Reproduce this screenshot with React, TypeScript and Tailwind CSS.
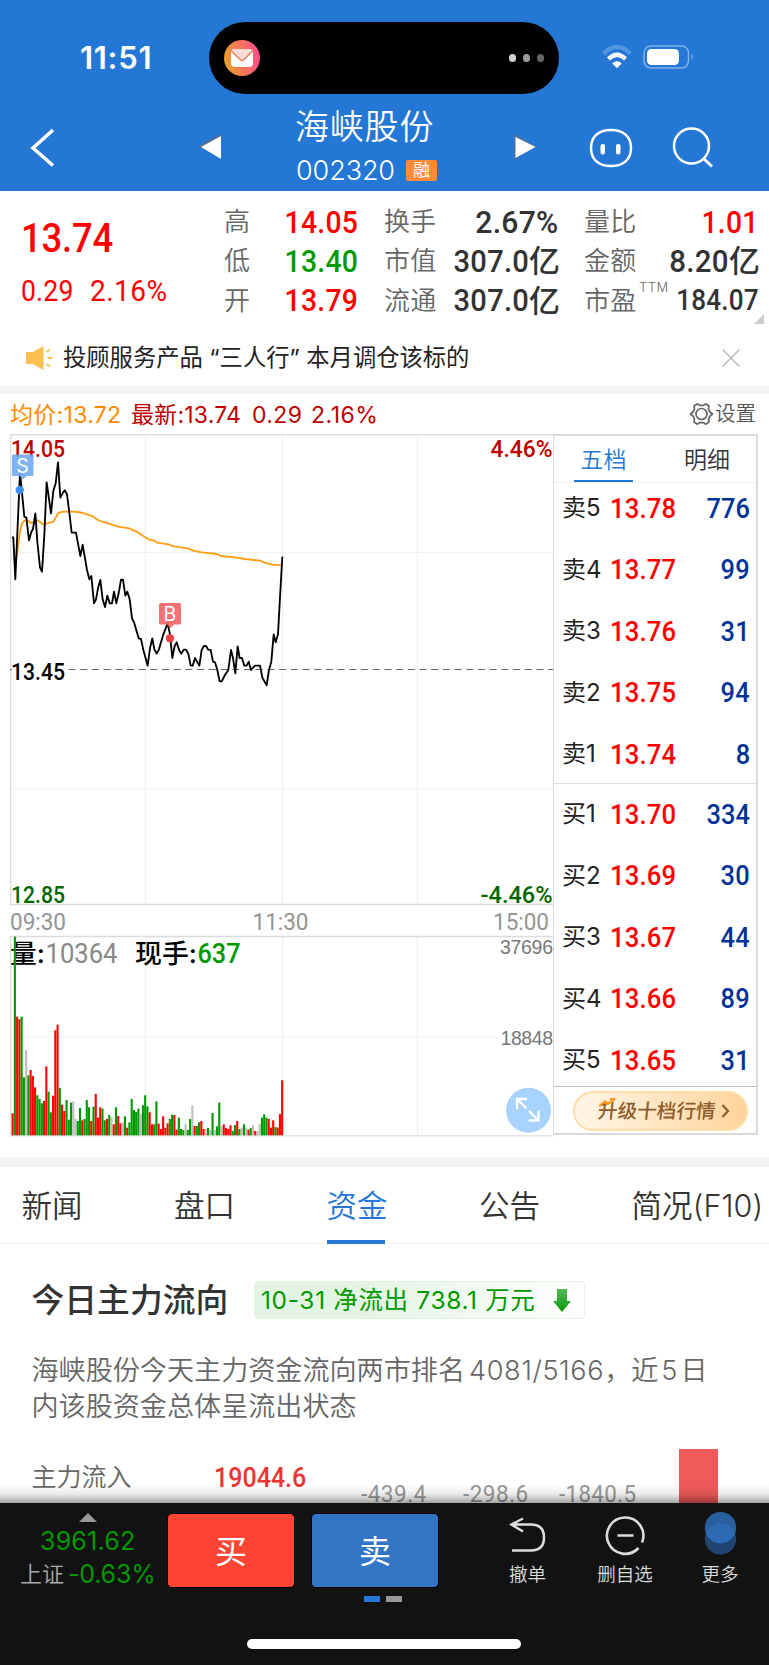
const PRICE_LINE =
  "37,455 40,458 46,583 60,262 73,395 79,398 87,466 94,440 99,432 106,385 112,470 120,548 126,560 133,450 140,292 153,385 160,318 167,295 174,232 181,338 188,325 194,316 201,328 207,375 215,443 228,443 241,513 248,479 261,555 268,583 274,573 282,655 288,643 295,605 301,585 308,643 315,666 322,632 329,655 336,655 342,620 349,655 356,625 363,584 369,584 376,632 382,620 389,643 396,700 402,712 416,760 423,762 430,795 443,842 450,790 457,760 463,793 470,806 477,793 490,748 503,715 510,748 517,819 524,783 530,772 537,794 544,806 551,794 558,794 565,806 572,842 578,842 585,819 598,842 605,795 612,783 618,783 625,794 632,795 639,830 645,832 652,855 659,889 665,889 675,870 685,855 693,795 699,819 706,865 713,784 719,819 726,819 733,842 740,842 746,830 753,855 765,842 780,842 787,878 800,901 807,855 814,830 821,748 827,772 834,748 841,620 847,515";

const AVG_LINE =
  "46,540 52,500 60,440 66,415 73,408 80,403 92,414 100,412 113,406 131,419 145,414 160,410 167,398 174,385 183,381 207,379 235,381 255,386 278,394 290,403 310,411 355,425 388,430 415,443 445,463 463,467 472,473 505,478 522,484 567,491 580,497 605,502 650,507 662,513 705,517 735,522 780,527 800,535 820,539 847,541";

// one entry per minute: r = up, g = down, n = flat, then the height
const VOLUME =
  "r66 g596 r356 r348 g356 g174 n256 g180 r196 r178 r144 g120 g109 g96 r103 r207 g131 g69 r119 r315 r332 g142 r92 r73 g106 g47 g98 n102 n49 g43 g82 r45 g49 g106 g84 r43 g86 r124 r53 r84 g80 g45 r49 g61 n55 r33 g84 r58 r36 n39 g57 r23 g39 g109 g76 g70 g80 n64 g90 g120 g87 r69 r33 g33 g102 r35 r19 r57 r23 r36 g49 g62 r61 r17 g53 g19 g16 n33 g16 g49 n90 r28 g28 g39 r43 r19 n19 g22 n16 g67 n16 g27 g98 n28 r33 r22 r19 r30 g13 g31 r43 g19 n23 g33 n23 r17 g22 n31 r13 n13 n33 g53 g63 g53 r49 r23 r45 g25 r23 r64 r165"
    .split(" ")
    .map(v => ({ dir: v[0], h: Number(v.slice(1)) }));

const BAR_COLOR: Record<string, string> = { r: "#ff0000", g: "#009900", n: "#bdbdbd" };

const SELLS = [
  ["卖5", "13.78", "776"],
  ["卖4", "13.77", "99"],
  ["卖3", "13.76", "31"],
  ["卖2", "13.75", "94"],
  ["卖1", "13.74", "8"],
];

const BUYS = [
  ["买1", "13.70", "334"],
  ["买2", "13.69", "30"],
  ["买3", "13.67", "44"],
  ["买4", "13.66", "89"],
  ["买5", "13.65", "31"],
];

const TABS = ["新闻", "盘口", "资金", "公告", "简况(F10)"];

const DIN = "inline-block whitespace-nowrap [font-family:Roboto,'Noto_Sans_CJK_SC',sans-serif]";

function StatusBar() {
  return (
    <div className="flex h-[94px] items-start">
      <div className="ml-[80px] mt-[40px] w-[129px] text-[31px] leading-[36px] font-semibold tracking-[0.7px]">11:51</div>
      <div className="mt-[22px] flex h-[72px] w-[350px] items-center rounded-full bg-black px-[15px]">
        <svg width="36" height="36" viewBox="0 0 36 36">
          <defs>
            <linearGradient id="mail" x1="0" y1="0.6" x2="1" y2="0.4">
              <stop offset="0" stopColor="#eda12b" />
              <stop offset="1" stopColor="#ff4b8b" />
            </linearGradient>
          </defs>
          <circle cx="18" cy="18" r="18" fill="url(#mail)" />
          <rect x="7" y="9" width="22" height="18" rx="4" fill="#fff" />
          <path d="M8 10.5 Q9 9 11 9 H25 Q27 9 28 10.5 L20.500 18.500 Q18 21 15.500 18.500 Z" fill="#ffdcd6" />
          <path d="M7.500 11 L15.500 19 Q18 22 20.500 19 L28.500 11" fill="none" stroke="#f4774f" strokeWidth="1.300" />
        </svg>
        <div className="ml-auto flex gap-[6.500px]">
          <i className="size-[7.500px] rounded-full bg-[#d0d0d0]" />
          <i className="size-[7.500px] rounded-full bg-[#9b9b9b]" />
          <i className="size-[7.500px] rounded-full bg-[#666]" />
        </div>
      </div>
      <svg className="ml-[43px] mt-[45px]" width="30" height="24" viewBox="0 0 30 24">
        <path d="M1.500 8.500 Q15 -4.500 28.500 8.500" fill="none" stroke="#5496e0" strokeWidth="4.200" />
        <path d="M6.500 14 Q15 5.500 23.500 14" fill="none" stroke="#fff" strokeWidth="4.200" />
        <path d="M10.300 18.500 Q15 14 19.700 18.500 L15 23.300 Z" fill="#fff" />
      </svg>
      <svg className="ml-[11px] mt-[45px]" width="52" height="24" viewBox="0 0 52 24">
        <rect x="1" y="1" width="44.500" height="22" rx="7" fill="none" stroke="#7fb0e7" strokeWidth="1.500" />
        <rect x="4" y="4" width="32" height="16" rx="4.500" fill="#fff" />
        <path d="M48.500 8.500 Q51 12 48.500 15.500 Z" fill="#7fb0e7" />
      </svg>
    </div>
  );
}

function NavBar() {
  return (
    <div className="flex h-[97px] items-start">
      <svg className="ml-[30px] mt-[34px]" width="26" height="40" viewBox="0 0 26 40">
        <path d="M23 2 L3 20 L23 37.500" fill="none" stroke="#fff" strokeWidth="3.500" />
      </svg>
      <svg className="ml-[142px] mt-[39px]" width="24" height="28" viewBox="0 0 24 28">
        <path d="M23 1 L1 13 L5 16 L22 5 Z" fill="#6b6b6b" opacity="0.7" />
        <path d="M23 3 V26 L3 14 Z" fill="#fff" />
      </svg>
      <div className="ml-[73px] mt-[11px] w-[152px]">
        <div className="text-[34px] leading-[44px] tracking-[0.8px] [font-weight:350]">海峡股份</div>
        <div className="flex h-[42px] items-center">
          <span className="ml-[1px] text-[27px] leading-[41px] tracking-[-0.1px] [font-weight:350]">002320</span>
          <span className="ml-auto mr-[10px] flex h-[21px] w-[31px] items-center justify-center rounded-[2px] bg-[#ff8b3a] text-[17px] leading-none">融</span>
        </div>
      </div>
      <svg className="ml-[67px] mt-[39px]" width="24" height="28" viewBox="0 0 24 28">
        <path d="M0 1 L23 14 L21 16 L3 6 V26 H0 Z" fill="#6b6b6b" opacity="0.7" />
        <path d="M1.500 4 V25 L21.500 14 Z" fill="#fff" />
      </svg>
      <svg className="ml-[51px] mt-[34px]" width="44" height="40" viewBox="0 0 44 40">
        <path d="M22 2 C35 2 42 9 42 20 C42 31 35 38 22 38 C9 38 2 31 2 20 C2 9 9 2 22 2 Z" fill="none" stroke="#fff" strokeWidth="2.500" />
        <rect x="11.500" y="16" width="4.500" height="10.500" rx="2" fill="#fff" />
        <rect x="27" y="16" width="4.500" height="10.500" rx="2" fill="#fff" />
      </svg>
      <svg className="ml-[39px] mt-[32px]" width="42" height="42" viewBox="0 0 42 42">
        <circle cx="19.500" cy="20" r="17.500" fill="none" stroke="#fff" strokeWidth="2.500" />
        <path d="M31.500 32.500 L40 40.500" stroke="#fff" strokeWidth="3" />
      </svg>
    </div>
  );
}

type StatProps = { label: string; sup?: string; value: string; unit?: string; tone?: string; size?: string };

function Stat({ label, sup, value, unit, tone = "text-[#333]", size = "text-[32px] scale-x-[0.885] tracking-[0.3px]" }: StatProps) {
  return (
    <div className="flex h-[39.300px] items-center justify-between">
      <span className="relative text-[26px] tracking-[0.2px] [font-weight:350] text-[#666] whitespace-nowrap">
        {label}
        {sup && <sup className="absolute left-[55px] top-[-4px] text-[13px] tracking-[0.5px] leading-[20px]">{sup}</sup>}
      </span>
      <span className={`flex items-center font-medium ${tone}`}>
        <span className={`${DIN} origin-right ${size}`}>{value}</span>
        {unit && <span className="-mr-[1px] text-[31px] leading-[39px]">{unit}</span>}
      </span>
    </div>
  );
}

function Quote() {
  return (
    <div className="flex h-[142px] items-start">
      <div className="w-[224px] pl-[21px] pt-[20px] text-[#f00]">
        <div className={`${DIN} origin-left scale-x-[0.9] text-[40.500px] leading-[54px] font-medium tracking-[-0.200px]`}>13.74</div>
        <div className="flex text-[29.500px] leading-[52px] [font-weight:450]">
          <span className={`${DIN} w-[69px] origin-left scale-x-[0.9] tracking-[0.200px]`}>0.29</span>
          <span className={`${DIN} origin-left scale-x-[0.95] tracking-[0.500px]`}>2.16%</span>
        </div>
      </div>
      <div className="w-[134px] pt-[11px]">
        <Stat label="高" value="14.05" tone="text-[#f00]" />
        <Stat label="低" value="13.40" tone="text-[#090]" />
        <Stat label="开" value="13.79" tone="text-[#f00]" />
      </div>
      <div className="ml-[26px] w-[175px] pt-[11px]">
        <Stat label="换手" value="2.67%" size="text-[32px] scale-x-[0.94] tracking-[0.3px]" />
        <Stat label="市值" value="307.0" unit="亿" size="text-[32px] scale-x-[0.91] tracking-[0.3px]" />
        <Stat label="流通" value="307.0" unit="亿" size="text-[32px] scale-x-[0.91] tracking-[0.3px]" />
      </div>
      <div className="ml-[25px] w-[175px] pt-[11px]">
        <Stat label="量比" value="1.01" tone="text-[#f00]" />
        <Stat label="金额" value="8.20" unit="亿" size="text-[32px] scale-x-[0.92] tracking-[0.3px]" />
        <Stat label="市盈" sup="TTM" value="184.07" size="text-[29px] scale-x-[0.9] tracking-[0.200px]" />
      </div>
      <svg className="-ml-[5px] mt-[123px] shrink-0" width="10" height="10" viewBox="0 0 10 10">
        <path d="M10 0 V10 H0 Z" fill="#ccc" />
      </svg>
    </div>
  );
}

function Notice() {
  return (
    <div className="flex h-[53px] items-center pb-[4px]">
      <svg className="ml-[25px]" width="28" height="26" viewBox="0 0 28 26">
        <path d="M1 7 H8 L18.500 1 V25 L8 19 H1 Z" fill="#fbc04f" />
        <path d="M21.500 7 L25 4.500 M22.500 13 H27.500 M21.500 19 L25 21.500" stroke="#fbc04f" strokeWidth="2" />
      </svg>
      <span className="ml-[10px] pt-[1px] text-[23.300px] text-[#222] whitespace-pre">投顾服务产品 “三人行” 本月调仓该标的</span>
      <svg className="ml-auto mr-[29px]" width="18" height="18" viewBox="0 0 18 18">
        <path d="M0.500 0.500 L17.500 17.500 M17.500 0.500 L0.500 17.500" stroke="#bbb" strokeWidth="1.500" />
      </svg>
    </div>
  );
}

function ChartHeader() {
  return (
    <div className="flex h-[40px] items-center pl-[10px] pr-[13px] text-[23px] leading-[40px]">
      <span className="w-[121px] pt-[2px] text-[#ff8a00] tracking-[0.3px]">均价:13.72</span>
      <span className="w-[121px] pt-[2px] text-[#c00000] tracking-[0.2px]">最新:13.74</span>
      <span className="w-[59px] pt-[2px] text-[#c00000] tracking-[0.400px]">0.29</span>
      <span className="pt-[2px] text-[#c00000] tracking-[0.500px]">2.16%</span>
      <svg className="ml-auto" width="25" height="24" viewBox="0 0 25 24">
        <path d="M8.500 1.800 L10.500 3.400 H14.500 L16.500 1.800 L20 4 L19.500 7 L21 10 L23.500 12 L21 14 L19.500 17 L20 20 L16.500 22.200 L14.500 20.600 H10.500 L8.500 22.200 L5 20 L5.500 17 L4 14 L1.500 12 L4 10 L5.500 7 L5 4 Z" fill="none" stroke="#666" strokeWidth="1.700" strokeLinejoin="round" />
        <circle cx="12.500" cy="12" r="5.500" fill="none" stroke="#666" strokeWidth="1.700" />
      </svg>
      <span className="ml-[1px] text-[20.500px] text-[#555] [font-weight:350] leading-[36px]">设置</span>
    </div>
  );
}

function Chart() {
  return (
    <svg className="shrink-0" width="543" height="705" viewBox="10 434 543 705">
      {/* grid */}
      <g stroke="#efefef" strokeWidth="1.200" fill="none">
        <path d="M145.500 434 V904 M282.500 434 V904 M417.500 434 V904 M10 552.500 H554 M10 789 H554" />
        <path d="M145.500 936 V1136 M282.500 936 V1136 M417.500 936 V1136 M10 1037 H500" />
      </g>
      <path d="M554 434.500 H10.700 V906 M10 904.500 H554 M10 936.500 H554 M10.700 936 V1136.500 M10 1135.800 H554" stroke="#dcdcdc" strokeWidth="1.300" fill="none" />
      <path d="M10 669.500 H554" stroke="#666" strokeWidth="1.200" strokeDasharray="7 4.700" />

      <g fontFamily="Roboto, sans-serif" fontSize="23.500" fontWeight="500">
        <text x="11" y="456.500" fill="#c00000" textLength="54" lengthAdjust="spacingAndGlyphs">14.05</text>
        <text x="490.500" y="456.500" fill="#c00000" textLength="62" lengthAdjust="spacingAndGlyphs">4.46%</text>
        <rect x="12" y="662" width="54" height="14" fill="#fff" />
        <text x="11" y="680" fill="#000" textLength="54" lengthAdjust="spacingAndGlyphs">13.45</text>
        <text x="11" y="903" fill="#006600" textLength="54" lengthAdjust="spacingAndGlyphs">12.85</text>
        <text x="480.500" y="903" fill="#006600" textLength="72" lengthAdjust="spacingAndGlyphs">-4.46%</text>
      </g>
      <g fontFamily="Roboto, sans-serif" fontSize="23.500" fill="#949494">
        <text x="10" y="930" textLength="56" lengthAdjust="spacingAndGlyphs">09:30</text>
        <text x="252.500" y="930" textLength="56" lengthAdjust="spacingAndGlyphs">11:30</text>
        <text x="493" y="930" textLength="56" lengthAdjust="spacingAndGlyphs">15:00</text>
      </g>

      <g transform="translate(0 385) scale(0.33333)" fill="none" strokeLinejoin="round">
        <polyline points={AVG_LINE} stroke="#ff9d14" strokeWidth="5.500" />
        <polyline points={PRICE_LINE} stroke="#000" strokeWidth="5.500" />
      </g>

      {/* trade markers */}
      <path d="M13.500 454.500 H32 Q33.500 454.500 33.500 456 V474.500 Q33.500 476 32 476 H26.500 L23 479.500 L19.500 476 H13.500 Q12 476 12 474.500 V456 Q12 454.500 13.500 454.500 Z" fill="#6faaf2" fillOpacity="0.9" />
      <text x="22.500" y="472.500" textAnchor="middle" fontFamily="Inter, sans-serif" fontSize="19.500" fill="#fff">S</text>
      <circle cx="19.700" cy="490" r="4.200" fill="#3c8df0" />
      <path d="M160.500 603 H179.500 Q181 603 181 604.500 V623 Q181 624.500 179.500 624.500 H174 L170.500 628 L167 624.500 H160.500 Q159 624.500 159 623 V604.500 Q159 603 160.500 603 Z" fill="#f16a6e" fillOpacity="0.95" />
      <text x="170" y="621" textAnchor="middle" fontFamily="Inter, sans-serif" fontSize="19.500" fill="#fff">B</text>
      <circle cx="170" cy="638.300" r="4.200" fill="#e64545" />

      {/* volume */}
      <g fontFamily="Inter, 'Noto Sans CJK SC', sans-serif" fontSize="26" fontWeight="500" fill="#000">
        <text x="10" y="963" textLength="35" lengthAdjust="spacingAndGlyphs">量:</text>
        <text x="135" y="963" textLength="62" lengthAdjust="spacingAndGlyphs">现手:</text>
      </g>
      <g fontFamily="Roboto, sans-serif" fontSize="27.500">
        <text x="45.500" y="963" fill="#888" textLength="72" lengthAdjust="spacingAndGlyphs">10364</text>
        <text x="197.500" y="963" fill="#009900" fontWeight="500" textLength="43" lengthAdjust="spacingAndGlyphs">637</text>
      </g>
      {VOLUME.map((v, i) => (
        <rect key={i} x={11.600 + i * 2.246} y={1135.300 - v.h / 3} width={2.100} height={v.h / 3} fill={BAR_COLOR[v.dir]} />
      ))}
      <g fontFamily="Liberation Sans, sans-serif" fontSize="19.500" fill="#777">
        <text x="500" y="954" textLength="53">37696</text>
        <text x="500.500" y="1045" textLength="52.500">18848</text>
      </g>

      <circle cx="528.500" cy="1110.300" r="22.500" fill="#a8d2ff" />
      <path d="M517 1109 V1099 H527 M517.500 1099.500 L526.500 1108.500 M538.500 1110.500 V1120.500 H528.500 M538 1120 L529 1111" fill="none" stroke="#fff" strokeWidth="2.300" />
    </svg>
  );
}

function Level({ row }: { row: string[] }) {
  return (
    <div className="flex h-[50px] shrink-0 items-center pl-[8px] pr-[6px] pt-[2px]">
      <span className="w-[48px] text-[24px] leading-[46px] pb-[2px] text-[#222] whitespace-nowrap">{row[0]}</span>
      <span className={`${DIN} origin-left scale-x-[0.9] text-[28.500px] font-medium tracking-[0.200px] text-[#f00]`}>{row[1]}</span>
      <span className={`${DIN} ml-auto origin-right scale-x-[0.89] text-[28.500px] font-medium tracking-[0.200px] text-[#003399]`}>{row[2]}</span>
    </div>
  );
}

function OrderBook() {
  return (
    <div className="box-border h-[701px] w-[205px] border-2 border-l border-[#dadada]">
      <div className="flex h-[47px] border-b border-[#eee] text-[23px] [font-weight:350]">
        <div className="ml-[20px] w-[59px] border-b-2 border-[#2477d5] text-center leading-[48px] text-[#2477d5]">五档</div>
        <div className="ml-[51px] leading-[48px] text-[#333]">明细</div>
      </div>
      <div className="flex h-[301px] flex-col gap-[11.500px] border-b border-[#ddd]">
        {SELLS.map(r => <Level key={r[0]} row={r} />)}
      </div>
      <div className="flex h-[303px] flex-col gap-[11.500px] border-b border-[#bbb] pt-[5px]">
        {BUYS.map(r => <Level key={r[0]} row={r} />)}
      </div>
      <div className="ml-[19px] mt-[4px] flex h-[40px] w-[175px] items-center rounded-full border-2 border-[#ffdca8] bg-linear-to-r from-[#fff5e6] to-[#ffd49a] pl-[23px]">
        <span className="relative -skew-x-6 pt-[1px] text-[19.600px] font-medium text-[#8f5b2a] whitespace-nowrap">
          升级十档行情
          <svg className="absolute left-[0px] top-[2px]" width="18" height="9" viewBox="0 0 18 9">
            <path d="M0.500 8 L6 3.500 L9 6 L15 1.500 M10.500 1 H16" fill="none" stroke="#ff9a1f" strokeWidth="2.200" />
          </svg>
        </span>
        <svg className="ml-[5px]" width="9" height="14" viewBox="0 0 9 14">
          <path d="M1.500 1 L7 7 L1.500 13" fill="none" stroke="#8f5b2a" strokeWidth="2.200" />
        </svg>
      </div>
    </div>
  );
}

function Tabs() {
  return (
    <div className="flex h-[77px] gap-[92.500px] border-b border-[#eee] pl-[21.500px] text-[30.500px] text-[#333] [font-weight:350]">
      {TABS.map(t => (
        <div key={t} className={`relative w-[60px] shrink-0 whitespace-nowrap leading-[78px] tracking-[0.1px] ${t === "资金" ? "text-[#2477d5]" : ""}`}>
          {t}
          {t === "资金" && <i className="absolute bottom-[-1px] left-0 h-[4px] w-[58px] bg-[#2477d5]" />}
        </div>
      ))}
    </div>
  );
}

function FundFlow() {
  return (
    <div className="h-[259px] pl-[31.500px]">
      <div className="flex h-[112px] items-center">
        <h2 className="w-[222.500px] pt-[1px] text-[32.800px] font-medium text-[#333]">今日主力流向</h2>
        <div className="flex h-[38px] w-[331px] items-center rounded-[4px] border border-[#e4f4e4] bg-linear-to-r from-[#e3f4e3] from-30% to-white pl-[6px] text-[24.500px] text-[#090]">
          <span className="whitespace-pre tracking-[0.650px]">10-31 净流出 738.1 万元</span>
          <svg className="ml-auto mr-[13px]" width="18" height="24" viewBox="0 0 18 24">
            <defs>
              <linearGradient id="down" x1="0" y1="0" x2="0" y2="1">
                <stop offset="0" stopColor="#55b855" />
                <stop offset="1" stopColor="#0a9a0a" />
              </linearGradient>
            </defs>
            <path d="M4 1 H14 V13 H18 L9 24 L0 13 H4 Z" fill="url(#down)" />
          </svg>
        </div>
      </div>
      <p className="mt-[-3px] h-[96px] text-[27.100px] leading-[36px] text-[#666] [font-weight:350]">
        <span className="block whitespace-nowrap">海峡股份今天主力资金流向两市排名<span className="ml-[4px] tracking-[0.600px]">4081/5166</span>，近<span className="mx-[3px]">5</span>日</span>
        <span className="block">内该股资金总体呈流出状态</span>
      </p>
      <div className="flex h-[54px] items-start">
        <span className="w-[182px] text-[25px] leading-[57px] text-[#666] [font-weight:350]">主力流入</span>
        <span className={`${DIN} w-[147px] origin-left scale-x-[0.91] text-[27.500px] leading-[58px] font-medium text-[#ee3333]`}>19044.6</span>
        <span className={`${DIN} mt-[31px] w-[102px] origin-left scale-x-[0.94] text-[24px] leading-[28px] tracking-[0.500px] text-[#999]`}>-439.4</span>
        <span className={`${DIN} mt-[31px] w-[96px] origin-left scale-x-[0.94] text-[24px] leading-[28px] tracking-[0.500px] text-[#999]`}>-298.6</span>
        <span className={`${DIN} mt-[31px] w-[120.500px] origin-left scale-x-[0.93] text-[24px] leading-[28px] tracking-[0.400px] text-[#999]`}>-1840.5</span>
        <i className="h-[54px] w-[39px] bg-[#ee5a5a]" />
      </div>
    </div>
  );
}

function BottomBar() {
  return (
    <div className="relative h-[162px] bg-[#121212]">
      <div className="absolute inset-x-0 top-[-18px] h-[18px] bg-linear-to-b from-black/0 via-black/8 to-black/35" />
      <div className="flex h-[93px] items-start">
        <div className="w-[167px] pt-[10px]">
          <svg className="ml-[79px] block" width="18" height="9" viewBox="0 0 18 9">
            <path d="M9 0 L18 9 H0 Z" fill="#999" />
          </svg>
          <div className="ml-[40px] mt-[1px] text-[25px] leading-[37px] text-[#090] tracking-[0.200px]">3961.62</div>
          <div className="ml-[20px] flex gap-[4px] leading-[28px] whitespace-nowrap">
            <span className="text-[22px] text-[#aaa] [font-weight:350]">上证</span>
            <span className="text-[25px] text-[#090] tracking-[-0.200px]">-0.63%</span>
          </div>
        </div>
        <div className="mt-[10px] flex h-[75px] w-[128px] items-center justify-center rounded-[5px] border border-black bg-[#ff4433] pt-[2px] text-[32px] text-white">买</div>
        <div className="ml-[16px] mt-[10px] flex h-[75px] w-[128px] items-center justify-center rounded-[5px] border border-black bg-[#3175c4] pt-[2px] text-[32px] text-white">卖</div>
        <div className="ml-[68px] mt-[12px] flex w-[41px] flex-col items-center text-[18.500px] leading-[34px] text-[#ddd] whitespace-nowrap [font-weight:350]">
          <svg width="40" height="42" viewBox="0 0 40 42">
            <path d="M4 35.500 H23 Q36 35.500 36 22.500 Q36 9.500 23 9.500 H4 M15 3.500 L3.500 9.500 L15 16.500" fill="none" stroke="#ddd" strokeWidth="2.500" />
          </svg>
          撤单
        </div>
        <div className="ml-[48px] mt-[12px] flex w-[58px] flex-col items-center text-[18.500px] leading-[34px] text-[#ddd] whitespace-nowrap [font-weight:350]">
          <svg width="42" height="42" viewBox="0 0 42 42">
            <path d="M38 27.500 A18.200 18.200 0 1 0 34.500 33 M13.500 20.500 H29.500" fill="none" stroke="#ddd" strokeWidth="2.600" />
          </svg>
          删自选
        </div>
        <div className="ml-[46px] mt-[12px] flex w-[40px] flex-col items-center text-[18.500px] leading-[34px] text-[#ddd] whitespace-nowrap [font-weight:350]">
          <svg className="overflow-visible" width="40" height="42" viewBox="0 0 40 42">
            <circle cx="20.500" cy="24" r="15.700" fill="#20436f" />
            <circle cx="20.500" cy="12.700" r="15.700" fill="#28609f" />
            <path d="M5.900 18.300 A15.700 15.700 0 0 1 35.100 18.300 A15.700 15.700 0 0 1 5.900 18.300 Z" fill="#2c6bb3" />
          </svg>
          更多
        </div>
      </div>
      <div className="ml-[364px] flex gap-[6px]">
        <i className="h-[6px] w-[16px] bg-[#2477d5]" />
        <i className="h-[6px] w-[16px] bg-[#999]" />
      </div>
      <div className="ml-[247px] mt-[37px] h-[10px] w-[274px] rounded-full bg-white" />
    </div>
  );
}

export default function App() {
  return (
    <div className="h-[1665px] w-[769px] overflow-hidden bg-white [font-family:Inter,'Noto_Sans_CJK_SC',sans-serif]">
      <header className="h-[191px] bg-[#2477d5] text-white">
        <StatusBar />
        <NavBar />
      </header>
      <Quote />
      <Notice />
      <div className="h-[8px] bg-[#f3f3f3]" />
      <ChartHeader />
      <div className="flex h-[723px] items-start pl-[10px]">
        <Chart />
        <OrderBook />
      </div>
      <div className="h-[10px] border-b border-[#f0f0f0] bg-[#f4f4f4]" />
      <Tabs />
      <FundFlow />
      <BottomBar />
    </div>
  );
}
